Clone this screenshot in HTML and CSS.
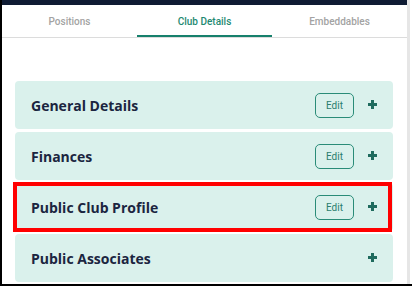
FILE: index.html
```html
<!DOCTYPE html>
<html>
<head>
<meta charset="utf-8">
<link rel="stylesheet" href="styles.css">
</head>
<body>
<div class="frame">
  <div class="main">
    <div class="topbar"></div>
    <nav class="tabs">
      <div class="tab">Positions</div>
      <div class="tab active">Club Details</div>
      <div class="tab">Embeddables</div>
    </nav>
    <div class="sections">
      <div class="card">
        <span class="title">General Details</span>
        <div class="actions">
          <button class="edit">Edit</button>
          <span class="plus"></span>
        </div>
      </div>
      <div class="card">
        <span class="title">Finances</span>
        <div class="actions">
          <button class="edit">Edit</button>
          <span class="plus"></span>
        </div>
      </div>
      <div class="card">
        <span class="title">Public Club Profile</span>
        <div class="actions">
          <button class="edit">Edit</button>
          <span class="plus"></span>
        </div>
      </div>
      <div class="card">
        <span class="title">Public Associates</span>
        <div class="actions">
          <span class="plus"></span>
        </div>
      </div>
      <div class="highlight"></div>
    </div>
  </div>
  <div class="scrollbar"></div>
</div>
</body>
</html>
```

FILE: styles.css
```css
* { box-sizing: border-box; }
html, body { margin: 0; padding: 0; background: #fff; }
body { width: 412px; height: 286px; overflow: hidden; }

.frame {
  width: 412px;
  height: 286px;
  display: flex;
  border-left: 2px solid #000;
  border-bottom: 2px solid #000;
  background: #fff;
}

.main {
  width: 405px;
  display: flex;
  flex-direction: column;
}

.scrollbar {
  width: 3px;
  background: #e6e6e6;
}

.topbar {
  height: 5px;
  background: #0f1b33;
}

.tabs {
  display: grid;
  grid-template-columns: repeat(3, 1fr);
  height: 33px;
  border-bottom: 1px solid #dcdcdc;
}

.tab {
  display: flex;
  align-items: center;
  justify-content: center;
  padding-top: 2px;
  font-family: Roboto, "Liberation Sans", sans-serif;
  font-size: 10px;
  font-weight: 500;
  color: #a3a3a3;
  border-bottom: 2px solid transparent;
}

.tab.active {
  color: #1e8a72;
  border-bottom-color: #16806c;
}

.sections {
  position: relative;
  display: flex;
  flex-direction: column;
  gap: 3px;
  padding: 43px 14px 0 13px;
}

.card {
  height: 48px;
  display: flex;
  align-items: center;
  justify-content: space-between;
  padding: 0 16px 0 16px;
  background: #daf1ec;
  border-radius: 4px;
}

.title {
  font-family: "Open Sans", sans-serif;
  font-size: 14px;
  font-weight: 700;
  color: #1b2540;
}

.actions {
  display: flex;
  align-items: center;
  gap: 14px;
}

.edit {
  width: 39px;
  height: 25px;
  padding: 0;
  border: 1.5px solid #2a8c78;
  border-radius: 5px;
  background: transparent;
  font-family: Roboto, "Liberation Sans", sans-serif;
  font-size: 10px;
  color: #2a7d6e;
}

.plus {
  position: relative;
  width: 9px;
  height: 9px;
  margin-top: -2px;
}
.plus::before, .plus::after {
  content: "";
  position: absolute;
  background: #1f6b5e;
}
.plus::before { left: 0; top: 3px; width: 9px; height: 3px; }
.plus::after { left: 3px; top: 0; width: 3px; height: 9px; }

.highlight {
  position: absolute;
  left: 11px;
  top: 144px;
  width: 379px;
  height: 50px;
  border: 4px solid #ff0000;
  pointer-events: none;
}
```
